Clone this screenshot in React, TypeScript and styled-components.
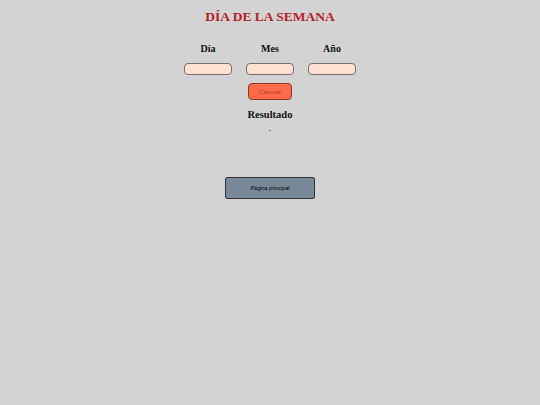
import React from 'react';
import styled, { createGlobalStyle } from 'styled-components';

const GlobalStyle = createGlobalStyle`
  html, body {
    margin: 0;
    padding: 0;
    background: #d3d3d3;
  }
  body {
    font-family: "Liberation Serif", "Times New Roman", serif;
  }
`;

const Page = styled.main`
  display: flex;
  flex-direction: column;
  align-items: center;
  min-height: 405px;
  padding-top: 9px;
  box-sizing: border-box;
`;

const Title = styled.h1`
  margin: 0;
  font-size: 13.5px;
  font-weight: bold;
  color: #b22222;
  line-height: 16px;
`;

const Fields = styled.div`
  display: flex;
  gap: 14px;
  margin-top: 18px;
`;

const Field = styled.label`
  display: flex;
  flex-direction: column;
  align-items: center;
  gap: 8px;
  width: 48px;
`;

const FieldLabel = styled.span`
  font-size: 10px;
  font-weight: bold;
  color: #111;
  line-height: 12px;
`;

const Input = styled.input`
  box-sizing: border-box;
  width: 48px;
  height: 12px;
  padding: 0 3px;
  border: 1px solid #7a6c6c;
  border-radius: 4px;
  background: #ffe0d2;
  font-size: 6px;
  outline: none;
`;

const CalcButton = styled.button`
  box-sizing: border-box;
  margin-top: 8px;
  width: 44px;
  height: 17px;
  padding: 0;
  border: 1px solid #8a3a2a;
  border-radius: 4px;
  background: #ff6a48;
  color: #b03a2a;
  font-family: "Liberation Sans", Arial, sans-serif;
  font-size: 6px;
  cursor: pointer;
`;

const ResultTitle = styled.h2`
  margin: 8px 0 0;
  font-size: 10.5px;
  font-weight: bold;
  color: #111;
  line-height: 13px;
`;

const ResultValue = styled.span`
  display: block;
  margin-top: 9px;
  width: 2px;
  height: 1px;
  background: #d06060;
`;

const HomeButton = styled.button`
  box-sizing: border-box;
  margin-top: 46px;
  width: 90px;
  height: 22px;
  padding: 0;
  border: 1px solid #333;
  border-radius: 2px;
  background: #778899;
  color: #000;
  font-family: "Liberation Sans", Arial, sans-serif;
  font-size: 5.5px;
  cursor: pointer;
`;

const fields = ['Día', 'Mes', 'Año'];

export default function App() {
  return (
    <>
      <GlobalStyle />
      <Page>
        <Title>DÍA DE LA SEMANA</Title>
        <Fields>
          {fields.map((f) => (
            <Field key={f}>
              <FieldLabel>{f}</FieldLabel>
              <Input type="text" />
            </Field>
          ))}
        </Fields>
        <CalcButton>Calcular</CalcButton>
        <ResultTitle>Resultado</ResultTitle>
        <ResultValue />
        <HomeButton>Página principal</HomeButton>
      </Page>
    </>
  );
}
